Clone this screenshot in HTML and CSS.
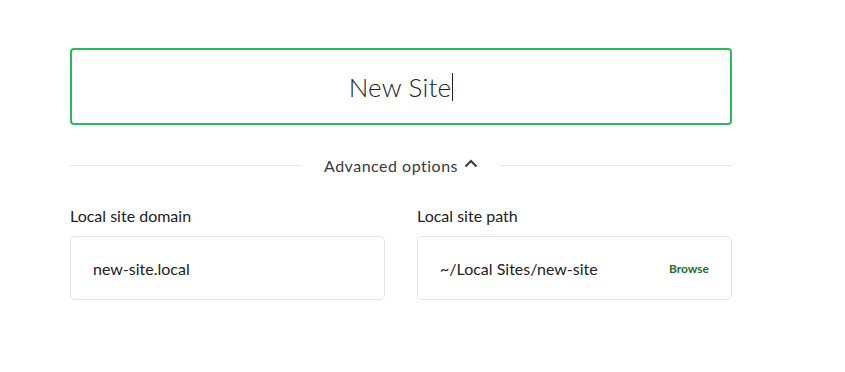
FILE: index.html
```html
<!DOCTYPE html>
<html lang="en">
<head>
    <meta charset="UTF-8">
    <title>New Site</title>
    <link rel="stylesheet" href="styles.css">
</head>
<body>
    <div class="new-site">
        <div class="site-name">
            <span class="site-name-text">New Site</span><span class="caret"></span>
        </div>

        <div class="advanced-toggle">
            <div class="rule"></div>
            <div class="advanced-label">
                Advanced options
                <svg class="chevron" width="14" height="9" viewBox="0 0 14 9">
                    <path d="M1.5 7.5 L7 2 L12.5 7.5" fill="none" stroke="#3a3a3a" stroke-width="2"/>
                </svg>
            </div>
            <div class="rule"></div>
        </div>

        <div class="fields">
            <div class="field">
                <div class="field-label">Local site domain</div>
                <div class="field-box">
                    <span class="field-value">new-site.local</span>
                </div>
            </div>
            <div class="field">
                <div class="field-label">Local site path</div>
                <div class="field-box">
                    <span class="field-value">~/Local Sites/new-site</span>
                    <span class="browse">Browse</span>
                </div>
            </div>
        </div>
    </div>
</body>
</html>
```

FILE: styles.css
```css
body {
    margin: 0;
    background: #fff;
    font-family: 'Lato', 'Open Sans', sans-serif;
    color: #1e1e1e;
}

.new-site {
    width: 662px;
    padding: 48px 0 0 70px;
}

.site-name {
    height: 73px;
    border: 2px solid #2bb95f;
    border-radius: 4px;
    display: flex;
    justify-content: center;
    align-items: center;
}

.site-name-text {
    font-size: 26px;
    font-weight: 300;
    letter-spacing: 0.2px;
    color: #222;
}

.caret {
    width: 1px;
    height: 28px;
    background: #222;
    margin-left: 1px;
}

.advanced-toggle {
    display: flex;
    align-items: center;
    margin-top: 30px;
    height: 20px;
}

.rule {
    flex: 1;
    height: 1px;
    background: #e6e6e6;
}

.advanced-label {
    display: flex;
    align-items: center;
    gap: 6px;
    padding: 0 22px;
    font-size: 16px;
    color: #3a3a3a;
    letter-spacing: 0.5px;
}

.chevron {
    margin-top: -3px;
}

.fields {
    display: flex;
    gap: 32px;
    margin-top: 31px;
}

.field {
    flex: 1;
}

.field-label {
    font-size: 16px;
    color: #222;
    line-height: 20px;
    margin-bottom: 10px;
}

.field-box {
    height: 62px;
    border: 1px solid #e3e3e3;
    border-radius: 5px;
    display: flex;
    align-items: center;
    justify-content: space-between;
    padding: 0 22px;
}

.field-value {
    font-size: 16px;
    color: #222;
}

.browse {
    font-size: 12px;
    font-weight: 700;
    color: #1b6e2f;
}
```
